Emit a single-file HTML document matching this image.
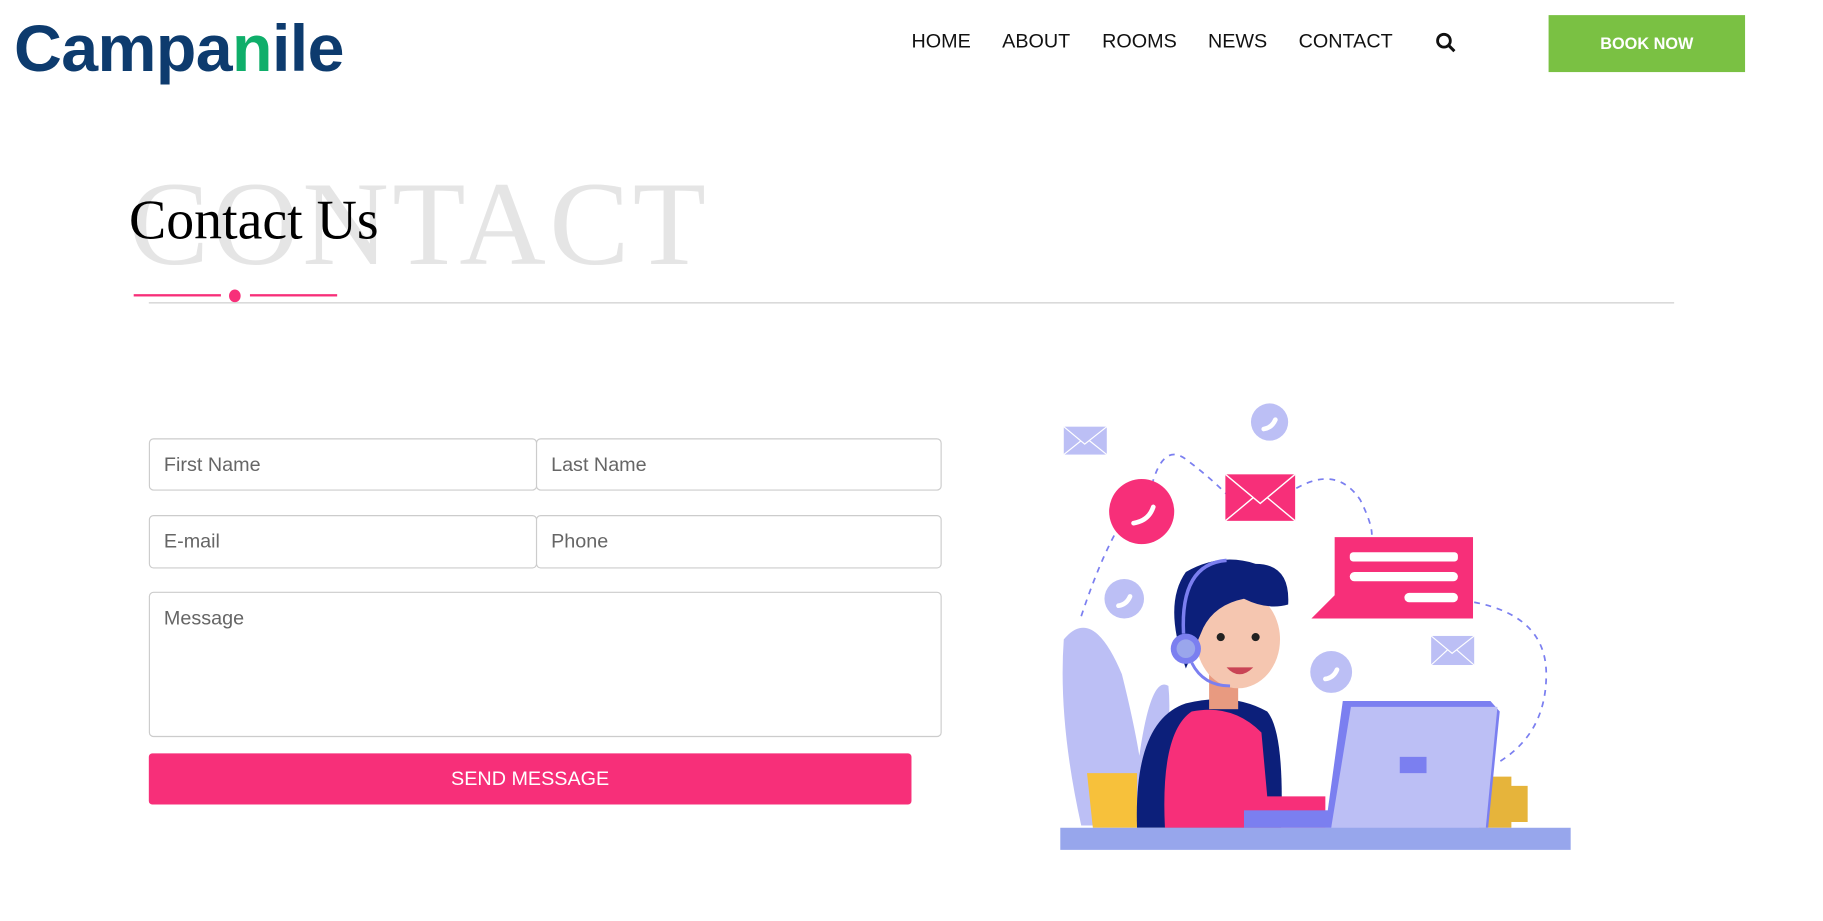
<!DOCTYPE html>
<html><head><meta charset="utf-8"><style>
html,body{margin:0;padding:0;background:#fff;width:1823px;height:920px;overflow:hidden}
#w{position:absolute;left:0;top:0;width:1568px;height:792px;transform:scale(1.1626);transform-origin:0 0;font-family:"Liberation Sans",Arial,sans-serif}
.a{position:absolute}
.logo{left:12px;top:9px;font-size:57px;font-weight:bold;color:#0d3b6e;letter-spacing:-0.5px;font-family:"Liberation Sans",sans-serif}
.nav{top:26px;font-size:17px;color:#111}
.book{left:1332px;top:13px;width:169px;height:49px;background:#7ac143;color:#fff;font-weight:bold;font-size:14px;text-align:center;line-height:49px}
.big{left:111px;top:142px;font-family:"Liberation Serif",serif;font-size:103px;color:#e5e5e5;letter-spacing:3px;line-height:1}
.title{left:111px;top:166px;font-family:"Liberation Serif",serif;font-size:48px;color:#000;line-height:1}
.in{border:1px solid #ccc;border-radius:4px;background:#fff;box-sizing:border-box;color:#666;font-size:17px;padding-left:12px}
</style></head><body><div id="w">
<div class="a logo">Campa<span style="color:#0fae6a">n</span>ile</div>
<div class="a nav" style="left:784px">HOME</div>
<div class="a nav" style="left:862px">ABOUT</div>
<div class="a nav" style="left:948px">ROOMS</div>
<div class="a nav" style="left:1039px">NEWS</div>
<div class="a nav" style="left:1117px">CONTACT</div>
<svg class="a" style="left:1234px;top:27px" width="20" height="20" viewBox="0 0 20 20"><circle cx="8" cy="8" r="5.5" fill="none" stroke="#111" stroke-width="2.4"/><line x1="12" y1="12" x2="17" y2="17" stroke="#111" stroke-width="2.6"/></svg>
<div class="a book">BOOK NOW</div>
<div class="a big">CONTACT</div>
<div class="a title">Contact Us</div>
<div class="a" style="left:115px;top:253px;width:75px;height:2px;background:#f72f79"></div>
<div class="a" style="left:197px;top:249px;width:10px;height:11px;border-radius:50%;background:#f72f79"></div>
<div class="a" style="left:215px;top:253px;width:75px;height:2px;background:#f72f79"></div>
<div class="a" style="left:128px;top:260px;width:1312px;height:1px;background:#ccc"></div>
<div class="a in" style="left:128px;top:377px;width:334px;height:45px;line-height:43px">First Name</div>
<div class="a in" style="left:461px;top:377px;width:349px;height:45px;line-height:43px">Last Name</div>
<div class="a in" style="left:128px;top:443px;width:334px;height:46px;line-height:44px">E-mail</div>
<div class="a in" style="left:461px;top:443px;width:349px;height:46px;line-height:44px">Phone</div>
<div class="a in" style="left:128px;top:509px;width:682px;height:125px;padding-top:12px">Message</div>
<div class="a" style="left:128px;top:648px;width:656px;height:44px;background:#f72f79;border-radius:3px;color:#fff;font-size:17px;text-align:center;line-height:44px">SEND MESSAGE</div>
<svg class="a" style="left:900px;top:340px" width="460" height="400" viewBox="900 340 460 400">
<g fill="none" stroke="#7b7ff0" stroke-width="1.5" stroke-dasharray="5 5">
<path d="M930 530 Q960 440 990 420 Q1000 380 1020 395 Q1040 410 1055 425"/>
<path d="M1115 420 Q1150 400 1170 430 Q1180 450 1180 460"/>
<path d="M1268 518 Q1330 530 1330 580 Q1330 630 1290 655"/>
</g>
<rect x="915" y="367" width="37" height="24" fill="#bcbff5"/><path d="M915 367 L933 382 L952 367 M915 391 L930 379 M952 391 L937 379" stroke="#fff" fill="none"/>
<rect x="1231" y="547" width="37" height="25" fill="#bcbff5"/><path d="M1231 547 L1249 562 L1268 547 M1231 572 L1245 559 M1268 572 L1253 559" stroke="#fff" fill="none"/>
<rect x="1054" y="408" width="60" height="40" fill="#f72f79"/><path d="M1054 408 L1084 433 L1114 408 M1054 448 L1078 428 M1114 448 L1090 428" stroke="#fff" fill="none" stroke-width="1.2"/>
<circle cx="1092" cy="363" r="16" fill="#bcbff5"/><circle cx="967" cy="515" r="17" fill="#bcbff5"/><circle cx="1145" cy="578" r="18" fill="#bcbff5"/>
<circle cx="982" cy="440" r="28" fill="#f72f79"/>
<g fill="none" stroke="#fff" stroke-width="4" stroke-linecap="round"><path d="M1087 369 Q1094 368 1097 361"/><path d="M962 521 Q969 520 972 513"/><path d="M1140 584 Q1147 583 1150 576"/><path d="M975 450 Q988 448 992 436"/></g>
<path d="M1148 462 H1267 V532 H1128 L1148 512 Z" fill="#f72f79"/>
<rect x="1161" y="475" width="93" height="8" rx="3" fill="#fff"/><rect x="1161" y="492" width="93" height="8" rx="4" fill="#fff"/><rect x="1208" y="510" width="46" height="8" rx="4" fill="#fff"/>
<path d="M930 710 Q910 620 915 550 Q940 520 965 580 Q975 620 980 650 Q990 580 1005 590 Q1010 640 985 710 Z" fill="#bcbff5"/>
<path d="M935 665 H978 V712 H940 Z" fill="#f7c13b"/>
<path d="M1272 668 H1300 V676 H1314 V707 H1300 V712 H1272 Z" fill="#e6b43b"/>
<path d="M978 712 Q975 620 1020 605 Q1060 595 1090 612 Q1105 630 1102 712 Z" fill="#0c1f7a"/>
<path d="M1002 712 Q998 630 1025 612 Q1060 605 1085 630 L1090 685 L1140 685 L1140 712 Z" fill="#f72f79"/>
<rect x="1040" y="580" width="25" height="30" fill="#e89a80"/>
<ellipse cx="1065" cy="550" rx="36" ry="42" fill="#f5c6b0"/>
<path d="M1020 575 Q1000 520 1020 492 Q1050 475 1080 485 Q1110 485 1108 520 Q1090 525 1070 515 Q1045 520 1035 540 Z" fill="#0c1f7a"/>
<path d="M1055 574 Q1066 586 1078 574 Z" fill="#c94455"/>
<circle cx="1050" cy="548" r="3.5" fill="#222"/><circle cx="1080" cy="548" r="3.5" fill="#222"/>
<circle cx="1020" cy="558" r="13" fill="#7b7ff0"/><circle cx="1020" cy="558" r="8" fill="#9aa6ec"/>
<path d="M1018 545 Q1015 485 1055 482" stroke="#7b7ff0" stroke-width="3" fill="none"/>
<path d="M1025 570 Q1035 590 1058 590" stroke="#7b7ff0" stroke-width="2.5" fill="none"/>
<path d="M1155 603 H1282 L1290 612 L1280 712 H1140 Z" fill="#7b7ff0"/>
<path d="M1162 608 H1288 L1278 712 H1145 Z" fill="#bcbff5"/>
<rect x="1204" y="651" width="23" height="14" fill="#7b7ff0"/>
<rect x="1070" y="697" width="75" height="15" fill="#7b7ff0"/>
<rect x="912" y="712" width="439" height="19" fill="#97a6ec"/>
</svg>
</div></body></html>
